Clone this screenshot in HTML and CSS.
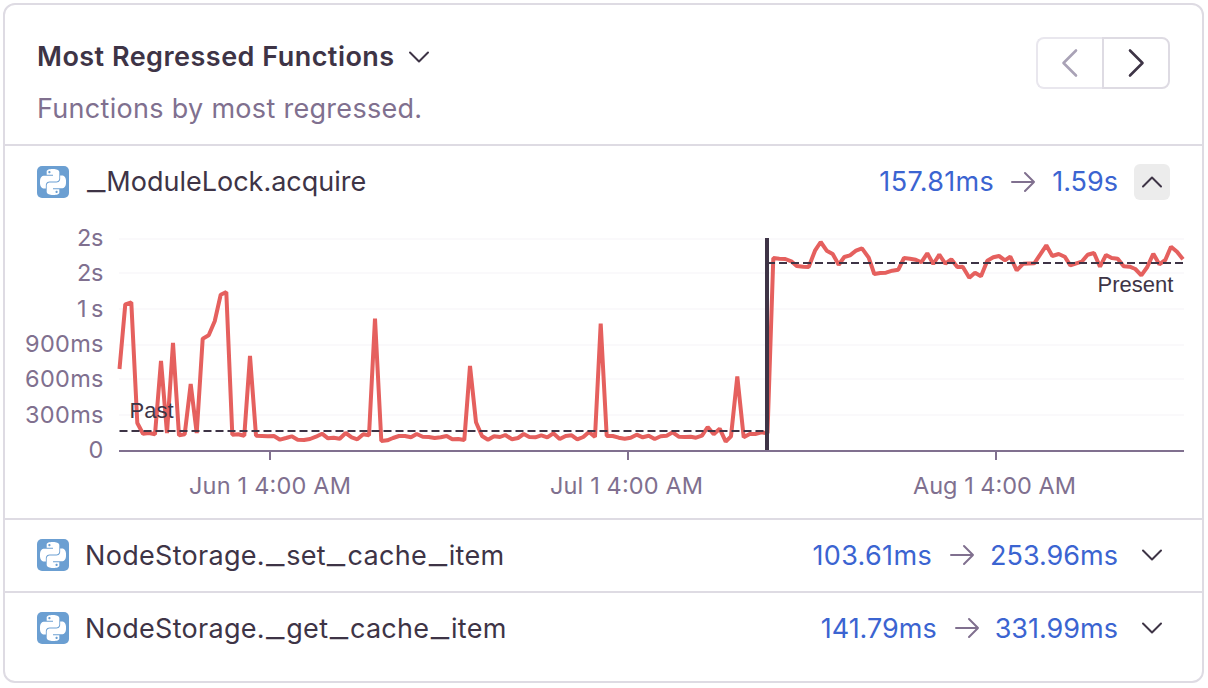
FILE: index.html
```html
<!DOCTYPE html>
<html lang="en">
<head>
<meta charset="utf-8">
<title>Most Regressed Functions</title>
<link rel="stylesheet" href="styles.css">
</head>
<body>
<svg class="defs" width="0" height="0" aria-hidden="true">
  <symbol id="python" viewBox="0 0 24 24">
    <path fill="#fff" d="M14.25.18l.9.2.73.26.59.3.45.32.34.34.25.34.16.33.1.3.04.26.02.2-.01.13V8.5l-.05.63-.13.55-.21.46-.26.38-.3.31-.33.25-.35.19-.35.14-.33.1-.3.07-.26.04-.21.02H8.77l-.69.05-.59.14-.5.22-.41.27-.33.32-.27.35-.2.36-.15.37-.1.35-.07.32-.04.27-.02.21v3.06H3.17l-.21-.03-.28-.07-.32-.12-.35-.18-.36-.26-.36-.36-.35-.46-.32-.59-.28-.73-.21-.88-.14-1.05-.05-1.23.06-1.22.16-1.04.24-.87.32-.71.36-.57.4-.44.42-.33.42-.24.4-.16.36-.1.32-.05.24-.01h.16l.06.01h8.16v-.83H6.18l-.01-2.75-.02-.37.05-.34.11-.31.17-.28.25-.26.31-.23.38-.2.44-.18.51-.15.58-.12.64-.1.71-.06.77-.04.84-.02 1.27.05zm-6.3 1.98l-.23.33-.08.41.08.41.23.34.33.22.41.09.41-.09.33-.22.23-.34.08-.41-.08-.41-.23-.33-.33-.22-.41-.09-.41.09zm13.09 3.95l.28.06.32.12.35.18.36.27.36.35.35.47.32.59.28.73.21.88.14 1.04.05 1.23-.06 1.23-.16 1.04-.24.86-.32.71-.36.57-.4.45-.42.33-.42.24-.4.16-.36.09-.32.05-.24.02-.16-.01h-8.22v.82h5.84l.01 2.76.02.36-.05.34-.11.31-.17.29-.25.25-.31.24-.38.2-.44.17-.51.15-.58.13-.64.09-.71.07-.77.04-.84.01-1.27-.04-1.07-.14-.9-.2-.73-.25-.59-.3-.45-.33-.34-.34-.25-.34-.16-.33-.1-.3-.04-.25-.02-.2.01-.13v-5.34l.05-.64.13-.54.21-.46.26-.38.3-.32.33-.24.35-.2.35-.14.33-.1.3-.06.26-.04.21-.02.13-.01h5.84l.69-.05.59-.14.5-.21.41-.28.33-.32.27-.35.2-.36.15-.36.1-.35.07-.32.04-.28.02-.21V6.07h2.09l.14.01zm-6.47 14.25l-.23.33-.08.41.08.41.23.33.33.23.41.08.41-.08.33-.23.23-.33.08-.41-.08-.41-.23-.33-.33-.23-.41-.08-.41.08z"/>
  </symbol>
  <symbol id="down" viewBox="0 0 22 14"><path d="M2 2.5 11 11.5 20 2.5"/></symbol>
  <symbol id="up" viewBox="0 0 22 14"><path d="M2 11.5 11 2.5 20 11.5"/></symbol>
  <symbol id="arrow" viewBox="0 0 26 22"><path d="M2 11H24M15 2 24 11 15 20"/></symbol>
</svg>

<section class="card">
  <header class="head">
    <div class="heading">
      <h2 class="title"><span>Most Regressed Functions</span><svg class="icon chev"><use href="#down"/></svg></h2>
      <p class="desc">Functions by most regressed.</p>
    </div>
    <div class="pager">
      <button class="page prev" aria-label="Previous"><svg class="icon" width="20" height="30" viewBox="0 0 20 30"><path d="M16 2.500 3.500 15 16 27.500"/></svg></button>
      <button class="page next" aria-label="Next"><svg class="icon" width="20" height="30" viewBox="0 0 20 30"><path d="M4 2.500 16.500 15 4 27.500"/></svg></button>
    </div>
  </header>

  <article class="item open">
    <div class="row">
      <span class="badge"><svg class="logo"><use href="#python"/></svg></span>
      <span class="name"><span class="us">_</span>ModuleLock.acquire</span>
      <span class="num wide">157.81ms</span><svg class="icon arrow"><use href="#arrow"/></svg><span class="num">1.59s</span>
      <button class="toggle active" aria-label="Collapse"><svg class="icon chev"><use href="#up"/></svg></button>
    </div>
    <svg class="chart" viewBox="5 218 1197 300" width="1197" height="300">
      <path class="grid" d="M119 239H1184M119 273H1184M119 309H1184M119 345H1184M119 379H1184M119 415H1184"/>
      <g class="axis-text">
        <text x="77" y="246" textLength="26.500">2s</text>
        <text x="77" y="281" textLength="26.500">2s</text>
        <text x="77" y="317" textLength="26.500">1s</text>
        <text x="25" y="352" textLength="78.500">900ms</text>
        <text x="25" y="387" textLength="78.500">600ms</text>
        <text x="25" y="423" textLength="78.500">300ms</text>
        <text x="88.500" y="458">0</text>
        <text x="189" y="494" textLength="162">Jun 1 4:00 AM</text>
        <text x="550" y="494" textLength="153">Jul 1 4:00 AM</text>
        <text x="913" y="494" textLength="163">Aug 1 4:00 AM</text>
      </g>
      <path class="axis" d="M119 451H1184M270 451V460M628 451V460M996 451V460"/>
      <polyline class="series" points="119.5,369 125.3,304.3 131.3,302.3 137.3,423 143,433.7 149,433 155,434.3 161,361 167,433 173,343 179,435.3 184.7,434.3 190.7,384 196.7,433 202.7,338.7 208.7,335.3 214.7,321.3 220.7,294.7 226.3,292 232.3,434.7 238.3,434.3 244.3,435.7 250,356 256,435.7 262,436 268,436.3 274,436 280,439.7 286,438 291.7,436.3 297.7,439.7 304,440 310,439 316,436.7 322,433.7 328,438.3 333.7,437.7 339.7,438.700 345.7,433 351.7,437.3 357.3,439.3 363.3,434.3 369,435.3 375,318.500 381.3,441 387.3,440.3 393,438 399,436 405,436 411,437.3 416.7,434 422.7,436.7 428.7,437 434.7,438 440.7,437.3 446.7,436 452.3,439.3 458.3,439 464.3,440 470,366 476,422.3 482,436 488,439.7 494,436.3 500,437 505.3,435 512,439.3 518,438 523.7,434 529.3,437 535.3,437.3 541.3,435.3 547.3,437.3 553.3,433.3 559.7,439 565.7,436 571.7,435.3 577.3,439.3 583.3,437 589,432 595,437 600.7,323.500 606.7,436 612.7,436 618.7,437.7 624.7,438.7 630.7,437.7 636.7,434.7 642.7,437.3 648.7,435.7 654.7,439 660.7,436.3 666.7,435.7 672.7,432.3 678.7,436.7 684.7,437 690.7,436.7 696,437.7 702,435.7 707.7,427 713.7,434.3 719.7,428.7 725.7,441.7 731,436.3 737.3,376.500 743.7,437.3 749.7,434 755.3,434 761.3,432.3 767.5,433.3 773.3,258 779.3,258.7 785.3,259 791.3,261.3 796.7,266 803.3,266.7 808.7,267 815,250.7 820.7,242 826.7,250.7 832.7,254 838.7,264.7 844.3,257 850,255.3 856,250.7 862,248.3 868.7,257.7 874.3,274 880.3,273 886,272.7 892.3,270.7 898.3,269.7 904,258 910,258.7 915.7,259.7 921.3,262.3 927.3,253.3 933.3,264 939.3,254.7 945.3,263.7 951.3,259.3 957.3,267 962.7,266.7 969.3,277.7 975,272.7 981,276.3 987.3,260.7 993.3,257.3 999,256 1005,260.3 1010.3,256.7 1016.7,270.3 1023.3,263.7 1034.3,263.3 1040.3,254.3 1046.3,245.3 1052.3,256 1058.7,254 1064.7,256.7 1070.3,265.3 1081.7,261.7 1087.7,254.7 1094,253 1100,266.7 1106,255 1111.7,258 1117.7,258.7 1123.7,266.3 1129.7,266.7 1135.3,269 1141.3,275.3 1147.3,267 1153.3,253.7 1159.3,264.3 1165.3,260 1171,246.7 1177,251.7 1183,259.3"/>
      <path class="mean" d="M119.500 431H767M767 263H1183"/>
      <path class="break" d="M767 238V450"/>
      <g class="mark-text">
        <text x="129.500" y="418">Past</text>
        <text x="1097.500" y="292">Present</text>
      </g>
    </svg>
  </article>

  <article class="item">
    <div class="row">
      <span class="badge"><svg class="logo"><use href="#python"/></svg></span>
      <span class="name">NodeStorage.<span class="us">_</span>set<span class="us">_</span>cache<span class="us">_</span>item</span>
      <span class="num wide">103.61ms</span><svg class="icon arrow"><use href="#arrow"/></svg><span class="num">253.96ms</span>
      <button class="toggle" aria-label="Expand"><svg class="icon chev"><use href="#down"/></svg></button>
    </div>
  </article>

  <article class="item last">
    <div class="row">
      <span class="badge"><svg class="logo"><use href="#python"/></svg></span>
      <span class="name">NodeStorage.<span class="us">_</span>get<span class="us">_</span>cache<span class="us">_</span>item</span>
      <span class="num">141.79ms</span><svg class="icon arrow"><use href="#arrow"/></svg><span class="num">331.99ms</span>
      <button class="toggle" aria-label="Expand"><svg class="icon chev"><use href="#down"/></svg></button>
    </div>
  </article>
</section>
</body>
</html>
```
FILE: styles.css
```css
* { box-sizing: border-box; }

body {
  margin: 0;
  padding: 3px 4px 5px 3px;
  background: #fff;
  color: #3e3446;
  font-family: Inter, "Liberation Sans", sans-serif;
  font-size: 27px;
}

.defs { position: absolute; }

button { margin: 0; padding: 0; background: none; border: 0; }

.icon {
  display: block;
  flex: none;
  fill: none;
  stroke: currentColor;
  stroke-width: 2;
  stroke-linecap: round;
  stroke-linejoin: round;
}

.chev { width: 22px; height: 14px; }

.card {
  height: 680px;
  border: 2px solid #dedbe3;
  border-radius: 12px;
  overflow: hidden;
}

.head {
  display: flex;
  justify-content: space-between;
  align-items: flex-start;
  height: 141px;
  padding: 32px 32px 0;
  border-bottom: 2px solid #dedbe3;
}

.heading { display: flex; flex-direction: column; gap: 12px; }

.title {
  display: flex;
  align-items: center;
  gap: 13px;
  margin: 0;
  font-size: 27px;
  line-height: 40px;
  font-weight: 600;
  letter-spacing: 0.48px;
}

.desc {
  margin: 0;
  color: #80708f;
  line-height: 40px;
  letter-spacing: 0.3px;
}

.pager { display: flex; width: 134px; height: 52px; }

.page {
  display: flex;
  align-items: center;
  justify-content: center;
  border: 2px solid #dedbe3;
}

.page .icon { stroke-width: 2.6; }

.prev {
  width: 66px;
  border-color: #e9e7ee;
  border-right: 0;
  border-radius: 8px 0 0 8px;
  color: #a9a2b6;
}

.next { width: 68px; border-radius: 0 8px 8px 0; color: #3e3446; }

.item { height: 73px; border-bottom: 2px solid #dedbe3; }
.item.open { height: 374px; }
.item.last { border-bottom: 0; }

.row {
  display: flex;
  align-items: center;
  height: 70px;
  padding: 0 32px;
}

.open .row { height: 72px; }
.open .name, .open .num { padding-bottom: 2px; }

.badge {
  display: flex;
  align-items: center;
  justify-content: center;
  flex: none;
  width: 32px;
  height: 32px;
  margin-right: 16px;
  border-radius: 5px;
  background: #6b9fd2;
}

.logo { width: 26px; height: 26px; }

.name { flex: 1; letter-spacing: 0.3px; white-space: nowrap; }
.open .name { letter-spacing: 0; }

/* Wide underscore that sits on the baseline */
.us {
  display: inline-block;
  margin: 0 4.5px;
  transform: translateY(-1px) scaleX(1.5);
}

.name .us:first-child { letter-spacing: 0; }
.open .us { margin: 0 4px 0 5px; }

.num { color: #3b64d1; }
.num.wide { letter-spacing: 0.35px; }

.arrow { width: 26px; height: 22px; margin: 0 15px 0 17px; color: #80708f; }
.open .arrow { margin: 0 16px; }

.toggle {
  display: flex;
  align-items: center;
  justify-content: center;
  width: 36px;
  height: 36px;
  margin-left: 16px;
  border-radius: 6px;
  color: #3e3446;
}

.toggle.active { background: #ececec; }

.chart { display: block; }

.grid { fill: none; stroke: #faf9fb; stroke-width: 2; }
.axis { fill: none; stroke: #80708f; stroke-width: 2; }
.series { fill: none; stroke: #e5605e; stroke-width: 4; stroke-linejoin: bevel; }
.mean { fill: none; stroke: #3e3446; stroke-width: 2; stroke-dasharray: 8 4; }
.break { stroke: #3e3446; stroke-width: 4; }
.axis-text { fill: #80708f; font-size: 23.500px; }
.mark-text { fill: #3e3446; font-family: "Liberation Sans", Arial, sans-serif; font-size: 22px; }
```
